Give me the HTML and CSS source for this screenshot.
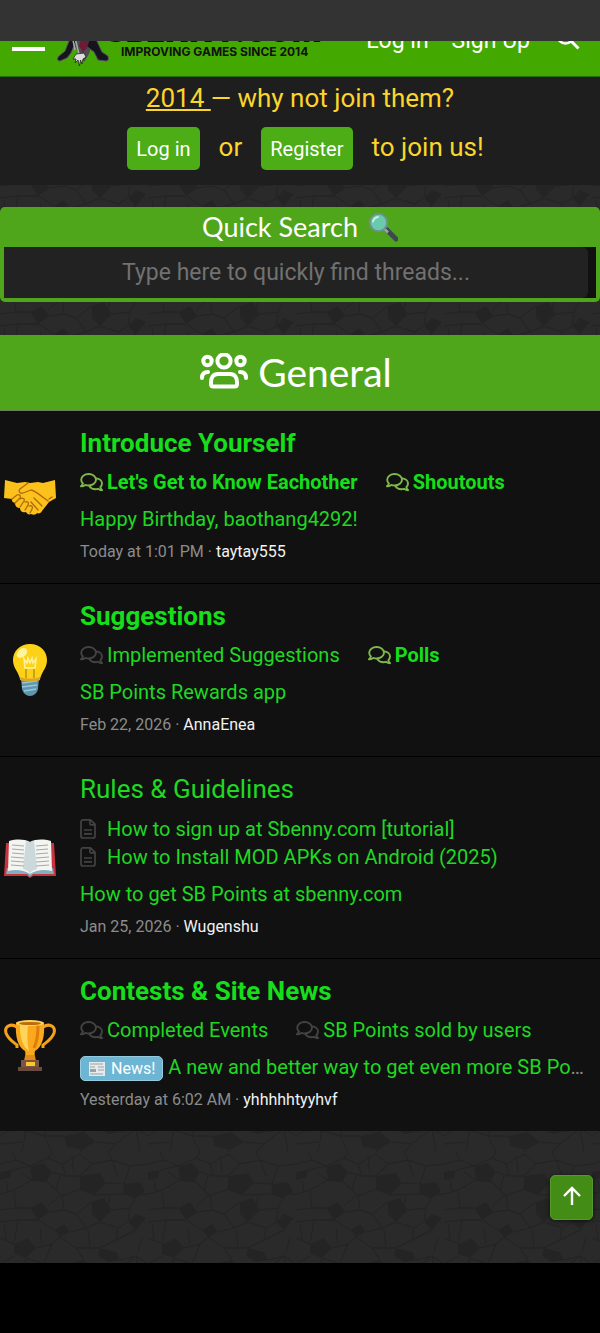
FILE: index.html
```html
<!DOCTYPE html>
<html lang="en">
<head>
    <meta charset="UTF-8">
    <meta name="viewport" content="width=device-width, initial-scale=1.0">
    <title>Forums</title>
    <link rel="stylesheet" href="styles.css">
</head>
<body>
    <!-- shared icons -->
    <svg class="sprite" aria-hidden="true">
        <symbol id="comments" viewBox="0 0 23 19">
            <g fill="none" stroke="currentColor" stroke-width="1.9" stroke-linecap="round" stroke-linejoin="round">
                <path d="M8.600 1C4.400 1 1.200 3.500 1.200 6.700c0 1.500.7 2.800 1.700 3.800-.3 1-1 2-1.900 2.800 1.700 0 3.200-.6 4.300-1.400 1 .4 2.100.6 3.300.6 4.200 0 7.400-2.600 7.400-5.800S12.800 1 8.600 1z"/>
                <path d="M16 5.400c3.400.2 6 2.500 6 5.200 0 1.400-.6 2.600-1.600 3.600.3 1.200.9 2.200 1.700 3-1.700 0-3-.6-4.100-1.400-.8.3-1.700.4-2.600.4-2.600 0-4.800-1.200-5.900-3"/>
            </g>
        </symbol>
        <symbol id="file" viewBox="0 0 16 20">
            <g fill="none" stroke="currentColor" stroke-width="1.7" stroke-linejoin="round">
                <path d="M3 .9h7.500L15 5.400V17a2 2 0 0 1-2 2H3a2 2 0 0 1-2-2V3A2 2 0 0 1 3 .9z"/>
                <path d="M10 1v3.800a1 1 0 0 0 1 1h4M4 11h8M4 14.800h8"/>
            </g>
        </symbol>
    </svg>

    <div class="status-bar"></div>

    <header class="header">
        <button class="menu-btn" aria-label="Menu"><span></span><span></span><span></span></button>
        <a class="logo" href="#">
            <svg class="logo-mascot" viewBox="0 0 54 40" aria-hidden="true">
                <path d="M16 0h22l-3 18-3 10-5 8-5-8-5-9z" fill="#4b4b50"/>
                <path d="M14 10l6 3-6 14-4 5-7 3c-3 0-3-3-1-5l6-5z" fill="#15141c" stroke="#5a5068"/>
                <path d="M33 12l6 1 6 13 6 4c1 3 0 5-2 5l-8-1-4-8-8-6z" fill="#15141c" stroke="#5a5068"/>
                <path d="M24 13l9-2-3 11-4 4-4-6z" fill="#6e1c35"/>
                <path d="M18 12l4 16M16 14l2 10" stroke="#aaa" stroke-width="1.500"/>
                <path d="M19 28l8-1 2 4-3 2-1 5-1.500-4-1 6-1.500-6-3 3 1-4-3 0z" fill="#ddd" stroke="#222" stroke-width=".8"/>
            </svg>
            <span class="logo-text">
                <strong>SBENNY.COM</strong>
                <small>IMPROVING GAMES SINCE 2014</small>
            </span>
        </a>
        <nav class="header-nav">
            <a href="#">Log in</a>
            <a href="#">Sign Up</a>
            <button class="search-btn" aria-label="Search">
                <svg viewBox="0 0 24 24" aria-hidden="true"><circle cx="9.500" cy="9.500" r="8" fill="none" stroke="#fff" stroke-width="2.500"/><path d="M15.500 15.500L22.500 22.500" stroke="#fff" stroke-width="3"/></svg>
            </button>
        </nav>
    </header>

    <section class="notice">
        <p><a href="#">2014 </a>— why not join them?</p>
        <div class="notice-actions">
            <a class="btn" href="#">Log in</a>
            <span>or</span>
            <a class="btn" href="#">Register</a>
            <span>to join us!</span>
        </div>
    </section>

    <section class="quick-search">
        <label for="quick">Quick Search
            <svg viewBox="0 0 30 30" aria-hidden="true">
                <path d="M19 18l9 9" stroke="#3c4a50" stroke-width="5" stroke-linecap="round"/>
                <path d="M16.500 17l3.500 3.500" stroke="#9aa5a9" stroke-width="2.500"/>
                <circle cx="10.500" cy="10.500" r="8.700" fill="#68cbab" stroke="#6f8f91" stroke-width="2"/>
                <path d="M5 9.500a6 6 0 0 1 5-4.500" fill="none" stroke="#c7efe0" stroke-width="2" stroke-linecap="round"/>
            </svg>
        </label>
        <div class="quick-field">
            <input type="text" id="quick" placeholder="Type here to quickly find threads...">
        </div>
    </section>

    <main class="category">
        <h2 class="category-title">
            <svg viewBox="0 0 48 38" aria-hidden="true">
                <g fill="none" stroke="#fff" stroke-width="4" stroke-linecap="round" stroke-linejoin="round">
                    <circle cx="24" cy="8" r="6.600"/>
                    <circle cx="7.500" cy="8" r="4.200"/>
                    <circle cx="40.500" cy="8" r="4.200"/>
                    <path d="M18 21h12c5 0 7 4 7 8v2c0 1.500-1 2.500-2.500 2.500h-21C12 33.500 11 32.500 11 31v-2c0-4 2-8 7-8z"/>
                    <path d="M2 25c0-4 2-6 6-6M46 25c0-4-2-6-6-6"/>
                </g>
            </svg>
            General
        </h2>

        <article class="node unread">
            <div class="node-icon">
                <svg viewBox="0 0 52 52" aria-hidden="true">
                    <path d="M1 9l12 3 8-1 5 1 8-1 5 1 12-3 1 18-7 4-7 9c-1 2-3 3-5 2-1 2-4 2-6 1-2 1-4 0-5-2-4 1-6-1-6-4-3 0-5-2-5-5-3-1-3-2-3-4L0 27z" fill="#fcc21b"/>
                    <g fill="none" stroke="#ad6910" stroke-width="1.300" stroke-linecap="round" stroke-linejoin="round">
                        <path d="M24 12l-8 6c-2 2 0 5 3 4l8-3c3 0 9 5 17 11M8 28l5-4c3-1 4 1 3 3l-5 5M16 28c3-2 5 0 4 2l-4 6M21 31c3-1 4 1 3 3l-3 5M25 35c3-1 4 1 3 3l-2 4M30 27l8 8M27 31l7 8M45 28l3-2"/>
                    </g>
                </svg>
            </div>
            <div class="node-body">
                <h3><a href="#">Introduce Yourself</a></h3>
                <ul class="subforums">
                    <li class="new"><a href="#"><svg><use href="#comments"/></svg>Let's Get to Know Eachother</a></li>
                    <li class="new"><a href="#"><svg><use href="#comments"/></svg>Shoutouts</a></li>
                </ul>
                <p class="latest"><a href="#">Happy Birthday, baothang4292!</a></p>
                <p class="meta"><time>Today at 1:01 PM</time> · <a href="#">taytay555</a></p>
            </div>
        </article>

        <article class="node unread">
            <div class="node-icon">
                <svg viewBox="0 0 52 52" aria-hidden="true">
                    <path d="M17 34h18l-1 11c-1 4-4 7-8 7s-7-3-8-7z" fill="#5b97ae"/>
                    <path d="M18 39l15-2M18 43l15-2M20 47l12-2" stroke="#9dc4d2" stroke-width="1.500"/>
                    <path d="M26 0C16 0 9 7 9 16c0 8 5 11 7 19 3 2 17 2 20 0 2-8 7-11 7-19C43 7 36 0 26 0z" fill="#fcd116"/>
                    <path d="M16 33c4 2 16 2 20 0v3c-4 2-16 2-20 0z" fill="#d6a72c"/>
                    <path d="M21 24l-1-9 3 4 1-5 2 5 2-5 1 5 3-4-1 9z" fill="none" stroke="#fff2a5" stroke-width="1.500"/>
                    <path d="M22 34v-9M30 34v-9" stroke="#b17f12" stroke-width="1.200"/>
                    <ellipse cx="18" cy="9" rx="6" ry="4" fill="#fff3a0" transform="rotate(-40 18 9)"/>
                </svg>
            </div>
            <div class="node-body">
                <h3><a href="#">Suggestions</a></h3>
                <ul class="subforums">
                    <li><a href="#"><svg><use href="#comments"/></svg>Implemented Suggestions</a></li>
                    <li class="new"><a href="#"><svg><use href="#comments"/></svg>Polls</a></li>
                </ul>
                <p class="latest"><a href="#">SB Points Rewards app</a></p>
                <p class="meta"><time>Feb 22, 2026</time> · <a href="#">AnnaEnea</a></p>
            </div>
        </article>

        <article class="node">
            <div class="node-icon">
                <svg viewBox="0 0 52 52" aria-hidden="true">
                    <path d="M2 11h48l2 33H29l-3 2-3-2H0z" fill="#c6343f"/>
                    <path d="M3 36h46l1 6H29l-3 3-3-3H2z" fill="#82aebf"/>
                    <path d="M5 9c8-2 15-2 21 1 6-3 13-3 21-1l1 30c-8-2-16-1-22 3-6-4-14-5-22-3z" fill="#f4f4f1"/>
                    <path d="M26 10v32c-1-3-4-4-7-5l3-28zM26 10v32c1-3 4-4 7-5L30 9z" fill="#cbd9dc"/>
                    <path d="M8 13l12 1M8 17l12 1M8 21l12 1M7 25l13 1M7 29l13 1M7 33l13 1M32 14l12-1M32 18l12-1M32 22l12-1M32 26l13-1M32 30l13-1M32 34l13-1" stroke="#a3a9aa" stroke-width="1"/>
                </svg>
            </div>
            <div class="node-body">
                <h3><a href="#">Rules &amp; Guidelines</a></h3>
                <ul class="pages">
                    <li><a href="#"><svg><use href="#file"/></svg>How to sign up at Sbenny.com [tutorial]</a></li>
                    <li><a href="#"><svg><use href="#file"/></svg>How to Install MOD APKs on Android (2025)</a></li>
                </ul>
                <p class="latest"><a href="#">How to get SB Points at sbenny.com</a></p>
                <p class="meta"><time>Jan 25, 2026</time> · <a href="#">Wugenshu</a></p>
            </div>
        </article>

        <article class="node unread">
            <div class="node-icon">
                <svg viewBox="0 0 52 52" aria-hidden="true">
                    <path d="M13 8C7 4 0 7 2 14c2 6 7 9 11 12v3M39 8c6-4 13-1 11 6-2 6-7 9-11 12v3" fill="none" stroke="#f5a11d" stroke-width="3"/>
                    <path d="M22 32h8l2 10H20z" fill="#e38b16"/>
                    <path d="M12 4h28c1 14-2 24-9 28l-1 4h-8l-1-4C14 28 11 18 12 4z" fill="#faa91d"/>
                    <path d="M16 6h8c-1 10-1 18 1 26-6-4-9-12-9-26z" fill="#ffd45a"/>
                    <path d="M34 7c0 9-1 16-4 22" fill="none" stroke="#df7d0d" stroke-width="3"/>
                    <ellipse cx="26" cy="4" rx="14" ry="3" fill="#ffd35a"/>
                    <ellipse cx="26" cy="4.500" rx="11" ry="1.600" fill="#b96d10"/>
                    <path d="M17 41h18v8H17z" fill="#795548"/>
                    <path d="M14 48h24v4H14z" fill="#6b4a3e"/>
                    <path d="M22 43h9v4h-9z" fill="#fdc827"/>
                </svg>
            </div>
            <div class="node-body">
                <h3><a href="#">Contests &amp; Site News</a></h3>
                <ul class="subforums">
                    <li><a href="#"><svg><use href="#comments"/></svg>Completed Events</a></li>
                    <li><a href="#"><svg><use href="#comments"/></svg>SB Points sold by users</a></li>
                </ul>
                <p class="latest">
                    <a class="label" href="#"><svg viewBox="0 0 18 16" aria-hidden="true"><path d="M1 1h16v14H1z" fill="#e6eaeb"/><path d="M2 3h13M2 6h5M10 6h6M10 9h6M2 13h13" stroke="#9aa4a8" stroke-width="1.200"/><path d="M2 8h6v3H2z" fill="#9aa4a8"/></svg>News!</a>
                    <a href="#">A new and better way to get even more SB Points every day</a>
                </p>
                <p class="meta"><time>Yesterday at 6:02 AM</time> · <a href="#">yhhhhhtyyhvf</a></p>
            </div>
        </article>
    </main>

    <footer class="page-end">
        <button class="to-top" aria-label="Top">
            <svg viewBox="0 0 20 20" aria-hidden="true"><path d="M10 19V2M2 10l8-8 8 8" fill="none" stroke="#fff" stroke-width="2.400"/></svg>
        </button>
    </footer>
    <div class="nav-bar"></div>
</body>
</html>
```

FILE: styles.css
```css
* {
    box-sizing: border-box;
}
body {
    margin: 0;
    font-family: Roboto, Arial, sans-serif;
    font-size: 20px;
    line-height: 28px;
    color: #8c8c8c;
    background-color: #2a2a2a;
    /* cracked stone tile */
    background-image: url("data:image/svg+xml,%3Csvg xmlns='http://www.w3.org/2000/svg' width='148' height='128'%3E%3Cg fill='%23242424'%3E%3Cpath d='M30 14l14-3 8 9-6 10-14-2zM80 24l20-3 6 10-12 12-14-6zM124 32l16-2 5 9-10 8-12-5zM92 50l12-4 8 12-12 12-8-8zM30 56l12-6 8 10-12 8zM146 66l-10-4-8 8 8 8zM14 92l14-6 8 10-10 10-12-4zM100 96l16 4 4 8-12 2-10-6zM64 112l20-4 12 10-14 8-16-4zM0 20l12-2-2 8-10 2zM54 78l10-6 6 8-10 5z'/%3E%3C/g%3E%3Cg fill='none' stroke='%23242424' stroke-width='1.400'%3E%3Cpath d='M0 12L16 8 30 14 48 6 62 12 80 2 92 12 112 8 130 14 148 12M12 18L30 14M52 20L66 24 80 24 92 12M106 31L124 32 130 14M0 42L14 38 32 28 48 30 62 44 80 37 94 43 124 42 148 42M14 38L16 56 30 56M50 60L64 58 76 62 92 50M112 58L130 56 135 47M0 70L18 68 38 68 54 78M70 80L86 76 100 70 118 76 128 70M0 86L14 92M36 96L52 92 60 85 76 96 100 96 116 88 136 78M26 106L44 112 64 112M76 96L84 108M0 112L14 104M120 108L136 104 148 112M96 118L116 120 136 104M16 8L12 0M48 6L52 0M112 8L108 0M66 24L62 12M32 28L20 20M62 44L64 58M16 56L0 58M18 68L14 92M76 62L86 76M118 76L116 88M130 56L128 70M52 92L44 112M26 106L22 128M44 112L52 128M82 126L80 128M116 120L108 128M136 104L140 128M112 8L118 24M72 4L74 20M6 28L8 40M60 44L48 54M110 44L108 54M4 72L6 88M40 76L42 92M88 78L90 94M142 86L138 100M0 120L22 118M60 24L56 38'/%3E%3C/g%3E%3C/svg%3E");
}
a {
    color: #1fd822;
    text-decoration: none;
}
button {
    padding: 0;
    border: none;
    background: none;
    cursor: pointer;
}
h2, h3, p, ul {
    margin: 0;
    padding: 0;
}
ul {
    list-style: none;
}
svg {
    flex-shrink: 0;
}
.sprite {
    display: none;
}
.status-bar {
    height: 41px;
    background: #333;
}

/* header is scrolled half way under the status bar */
.header {
    display: flex;
    align-items: flex-end;
    height: 36px;
    padding: 0 20px 10px 12px;
    overflow: hidden;
    background: #43a900;
    border-bottom: 1px solid #237000;
}
.menu-btn {
    display: flex;
    flex-direction: column;
    gap: 7px;
    width: 33px;
    margin-bottom: 15px;
}
.menu-btn span {
    height: 4px;
    background: #fff;
}
.logo {
    display: flex;
    align-items: flex-end;
    margin-left: 12px;
    color: #111;
}
.logo-mascot {
    width: 54px;
    height: 40px;
}
.logo-text {
    display: flex;
    flex-direction: column;
    margin: 0 0 7px -6px;
}
.logo-text strong {
    font: 900 31px/28px Inter, sans-serif;
}
.logo-text small {
    padding-left: 16px;
    font: 700 12px/14px Inter, sans-serif;
}
.header-nav {
    display: flex;
    align-items: flex-end;
    gap: 23px;
    margin: 0 0 13px auto;
}
.header-nav a {
    font-size: 23px;
    line-height: 24px;
    color: #fff;
}
.search-btn svg {
    display: block;
    width: 24px;
    height: 24px;
    margin: 0 0 3px 3px;
}

.notice {
    padding: 4px 10px 15px;
    background: #1e1e1e;
    color: #fbd52b;
    font-size: 26px;
    line-height: 34px;
    text-align: center;
}
.notice p a {
    color: #fbd52b;
    text-decoration: underline;
    white-space: pre;
}
.notice-actions {
    display: flex;
    justify-content: center;
    align-items: baseline;
    gap: 19px;
    margin-top: 12px;
    padding-left: 11px;
}
.btn {
    padding: 8px 9px 7px;
    border-radius: 5px;
    background: #4cad17;
    color: #fff;
    font-size: 20px;
    line-height: 28px;
}

.quick-search {
    margin-top: 22px;
    border: 4px solid #50a61b;
    border-top: 0;
    border-radius: 5px;
    background: #50a61b;
}
.quick-search label {
    display: flex;
    justify-content: center;
    align-items: center;
    gap: 10px;
    height: 40px;
    color: #fff;
    font-family: Lato, sans-serif;
    font-size: 27px;
}
.quick-search label svg {
    width: 30px;
    height: 30px;
}
.quick-field {
    padding-right: 8px;
    background: #111;
}
.quick-field input {
    display: block;
    width: 100%;
    height: 51px;
    padding: 0;
    border: none;
    border-radius: 0 6px 6px 0;
    background: #222;
    color: #ddd;
    font: 23px Roboto, Arial, sans-serif;
    text-align: center;
}
.quick-field input::placeholder {
    color: #717171;
}

.category {
    margin-top: 33px;
    background: #111;
}
.category-title {
    display: flex;
    justify-content: center;
    align-items: center;
    gap: 10px;
    padding: 13px 8px 14px 0;
    border-bottom: 1px solid #6a7f5e;
    background: #50a61b;
    color: #fff;
    font: 400 39px/48px Lato, sans-serif;
}
.category-title svg {
    width: 48px;
    height: 38px;
}

.node {
    display: flex;
    align-items: center;
}
.node + .node {
    border-top: 1px solid #000;
}
.node-icon {
    flex-shrink: 0;
    width: 80px;
    padding-left: 4px;
}
.node-icon svg {
    display: block;
    width: 52px;
    height: 52px;
}
.node-body {
    flex: 1;
    min-width: 0;
    padding: 16px 15px 19px 0;
}
.node h3 {
    font-size: 26px;
    line-height: 32px;
    font-weight: 400;
}
.unread h3 {
    font-weight: 700;
}
.subforums {
    display: flex;
    flex-wrap: wrap;
    gap: 0 28px;
    margin-top: 9px;
}
.subforums a {
    display: flex;
    align-items: center;
    gap: 4px;
}
.subforums svg {
    width: 23px;
    height: 19px;
    color: #434343;
}
.new a {
    font-weight: 700;
}
.unread h3 a,
.new a {
    color: #16de1a;
}
.subforums .new svg {
    color: #7fb84a;
}
.pages {
    margin-top: 10px;
}
.pages a {
    display: flex;
    align-items: center;
    gap: 11px;
}
.pages svg {
    width: 16px;
    height: 20px;
    color: #434343;
}
.latest {
    margin-top: 9px;
    overflow: hidden;
    text-overflow: ellipsis;
    white-space: nowrap;
}
.label {
    display: inline-block;
    padding: 0 7px;
    border: 1px solid #94cbe0;
    border-radius: 5px;
    background: #6cb5d3;
    color: #fff;
    font-size: 16px;
    line-height: 23px;
}
.label svg {
    width: 18px;
    height: 16px;
    margin-right: 5px;
    vertical-align: -3px;
}
.meta {
    margin-top: 7px;
    font-size: 16px;
    line-height: 24px;
}
.meta a {
    color: #f2f2f2;
}

.page-end {
    display: flex;
    justify-content: flex-end;
    padding: 44px 7px 43px;
}
.to-top {
    display: flex;
    justify-content: center;
    align-items: center;
    width: 43px;
    height: 45px;
    padding-bottom: 4px;
    border: 1px solid #57992c;
    border-radius: 5px;
    background: #438d17;
    box-shadow: 0 1px 4px rgba(0, 0, 0, 0.6);
}
.to-top svg {
    width: 20px;
    height: 20px;
}
.nav-bar {
    height: 70px;
    background: #000;
}
```
